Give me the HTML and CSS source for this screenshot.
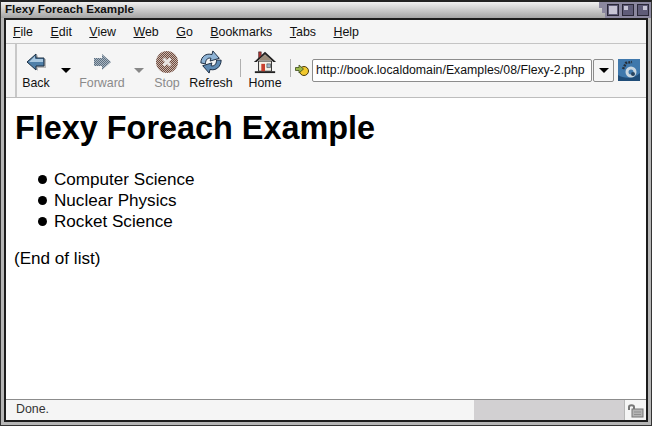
FILE: index.html
```html
<!DOCTYPE html>
<html lang="en">
<head>
  <meta charset="UTF-8">
  <title>Flexy Foreach Example</title>
  <link rel="stylesheet" href="styles.css">
</head>
<body>

  <div class="window">
    <div class="titlebar">
      <span class="title">Flexy Foreach Example</span>
      <div class="wm-buttons">
        <span class="wm-btn"><i class="wm-full"></i></span>
        <span class="wm-btn"><i class="wm-half"></i></span>
        <span class="wm-btn"><i class="wm-half wm-right"></i></span>
      </div>
    </div>

    <div class="frame">
      <div class="menubar">
        <span class="menu"><u>F</u>ile</span>
        <span class="menu"><u>E</u>dit</span>
        <span class="menu"><u>V</u>iew</span>
        <span class="menu"><u>W</u>eb</span>
        <span class="menu"><u>G</u>o</span>
        <span class="menu"><u>B</u>ookmarks</span>
        <span class="menu"><u>T</u>abs</span>
        <span class="menu"><u>H</u>elp</span>
      </div>

      <div class="toolbar">
        <div class="grip"></div>

        <div class="tool tool-back">
          <svg width="24" height="24" viewBox="0 0 24 24">
            <path d="M5 13 L14 5 V9 H22 V18 H14 V21 Z" fill="#bbb"/>
            <path d="M3 12 L12 4 V8 H20 V16 H12 V20 Z" fill="#4f7fa8" stroke="#1c2f42"/>
            <path d="M5 12 L11 6 V9 H19 V12 Z" fill="#a9c8e0"/>
          </svg>
          <span>Back</span>
        </div>
        <div class="arrow"></div>

        <div class="tool tool-forward off">
          <svg width="24" height="24" viewBox="0 0 24 24">
            <defs>
              <pattern id="dither" width="2" height="2" patternUnits="userSpaceOnUse">
                <rect width="2" height="2" fill="#a9b6c2"/>
                <rect width="1" height="1" fill="#5d6f80"/>
                <rect x="1" y="1" width="1" height="1" fill="#5d6f80"/>
              </pattern>
              <pattern id="ditherstop" width="2" height="2" patternUnits="userSpaceOnUse">
                <rect width="2" height="2" fill="#c9b7ae"/>
                <rect width="1" height="1" fill="#6e4a3e"/>
                <rect x="1" y="1" width="1" height="1" fill="#6e4a3e"/>
              </pattern>
            </defs>
            <path d="M21 12 L12 4 V8 H4 V16 H12 V20 Z" fill="url(#dither)"/>
          </svg>
          <span>Forward</span>
        </div>
        <div class="arrow off"></div>

        <div class="tool tool-stop off">
          <svg width="24" height="24" viewBox="0 0 24 24">
            <circle cx="12" cy="12" r="11" fill="url(#ditherstop)"/>
            <path d="M8.500 8.500 L15.500 15.500 M15.500 8.500 L8.500 15.500" stroke="#e8e4e2" stroke-width="3"/>
          </svg>
          <span>Stop</span>
        </div>

        <div class="tool tool-refresh">
          <svg width="26" height="26" viewBox="0 0 26 26">
            <path d="M2 14 C2 7 8 3 14 5 L15 1 L22 9 L12 12 L13 9 C10 8 7 10 7 15 Z" fill="#8fb4d6" stroke="#14243a"/>
            <path d="M24 11 C24 18 18 23 12 21 L11 25 L4 17 L14 14 L13 17 C16 18 19 16 19 11 Z" fill="#5f8ab3" stroke="#14243a"/>
          </svg>
          <span>Refresh</span>
        </div>

        <div class="sep"></div>

        <div class="tool tool-home">
          <svg width="26" height="26" viewBox="0 0 26 26">
            <path d="M2 23 H24 V25 H2 Z" fill="#222"/>
            <path d="M6 12 H20 V23 H6 Z" fill="#f6f2e8" stroke="#222"/>
            <path d="M1 13 L13 2 L25 13 H22 L13 5 L4 13 Z" fill="#222"/>
            <path d="M6 11 L13 5 L20 11 Z" fill="#9a8a78"/>
            <path d="M6 2 H9 V6 L6 9 Z" fill="#a33" stroke="#222" stroke-width=".5"/>
            <path d="M9 15 H13 V23 H9 Z" fill="#c8402f"/>
            <path d="M15 15 H19 V19 H15 Z" fill="#9db4c8" stroke="#222" stroke-width=".5"/>
          </svg>
          <span>Home</span>
        </div>

        <div class="sep sep-url"></div>

        <svg class="go-icon" width="14" height="12" viewBox="0 0 14 12">
          <circle cx="9" cy="7" r="4.5" fill="#f2c92e" stroke="#4a3b10"/>
          <path d="M0.5 3.500 H4 V1 L8.500 5 L4 9 V6.500 H0.500 Z" fill="#9ab84a" stroke="#3d4a1a" stroke-width=".8"/>
        </svg>

        <div class="urlbar">
          <div class="url">http://book.localdomain/Examples/08/Flexy-2.php</div>
          <div class="url-drop"><i></i></div>
        </div>

        <div class="throbber">
          <svg width="22" height="22" viewBox="0 0 22 22">
            <rect width="22" height="22" fill="#3f78ac"/>
            <path d="M0 16 C6 20 16 20 22 14 V22 H0 Z" fill="#1f4c78"/>
            <circle cx="13" cy="13" r="4" fill="none" stroke="#c9d6e0" stroke-width="3"/>
            <path d="M5 10 L8 4 L14 3" fill="none" stroke="#27303a" stroke-width="2.500" stroke-dasharray="2 1"/>
            <circle cx="15" cy="15" r="2" fill="#27435e"/>
          </svg>
        </div>
      </div>

      <div class="content">
        <h1>Flexy Foreach Example</h1>
        <ul>
          <li>Computer Science</li>
          <li>Nuclear Physics</li>
          <li>Rocket Science</li>
        </ul>
        <p>(End of list)</p>
      </div>

      <div class="statusbar">
        <div class="status-text">Done.</div>
        <div class="status-progress"></div>
        <div class="status-lock">
          <svg width="18" height="15" viewBox="0 0 18 15">
            <path d="M2 7 V4 C2 1.500 7 1.500 7 4 V6" fill="none" stroke="#777" stroke-width="2"/>
            <rect x="5" y="6" width="11" height="8" fill="#b4b4b4" stroke="#777"/>
            <path d="M7 9 H14 M7 11.500 H14" stroke="#8f8f8f"/>
          </svg>
        </div>
      </div>
    </div>
  </div>

</body>
</html>
```

FILE: styles.css
```css
html, body {
  margin: 0;
  padding: 0;
}

body {
  width: 652px;
  height: 426px;
  overflow: hidden;
  font-family: "Liberation Sans", sans-serif;
  background-color: #fff;
}

.window {
  box-sizing: border-box;
  width: 652px;
  height: 426px;
  display: flex;
  flex-direction: column;
  background-color: #b5b5b5;
  border: 1px solid #333;
  border-top: 2px solid #222;
  padding: 0 3px 3px 3px;
}

.titlebar {
  height: 16px;
  margin: 0 -3px;
  padding-left: 4px;
  display: flex;
  justify-content: space-between;
  background: linear-gradient(#f0f0f0, #a4a4a4);
  font-size: 11.6px;
  font-weight: bold;
  line-height: 13px;
  color: #111;
}

.wm-buttons {
  display: flex;
  height: 16px;
  padding: 0 2px 0 11px;
  gap: 3px;
  background-color: #8b889f;
  clip-path: polygon(3px 0, 100% 0, 100% 100%, 9px 100%, 9px 11px, 6px 11px, 6px 6px, 3px 6px);
}

.wm-btn {
  width: 12px;
  height: 12px;
  margin-top: 2px;
  padding: 1px;
  box-sizing: border-box;
  border: 1px solid #2a2838;
  background-color: #5f5c78;
}

.wm-btn i {
  display: block;
  width: 8px;
  height: 8px;
  background-color: #c6c4d4;
}

.wm-btn .wm-half {
  width: 4px;
  height: 4px;
}

.wm-btn .wm-right {
  margin-left: 4px;
}

.frame {
  flex: 1;
  min-height: 0;
  display: flex;
  flex-direction: column;
  border: 2px solid #1c1c1c;
  background-color: #f5f5f5;
}

.menubar {
  height: 23px;
  padding-left: 7px;
  display: flex;
  align-items: center;
  gap: 17.5px;
  font-size: 12.4px;
  color: #111;
  border-bottom: 1px solid #c4c4c4;
}

.toolbar {
  height: 53px;
  display: flex;
  align-items: flex-start;
  border-bottom: 1px solid #bdbdbd;
  font-size: 12.4px;
  color: #111;
}

.grip {
  width: 5px;
  height: 53px;
  margin-left: 2px;
  padding-right: 2px;
  border-right: 2px solid #c8c8c8;
  background-image: radial-gradient(#999 40%, transparent 50%);
  background-size: 2px 2px;
  background-position: 0 10px;
  background-clip: content-box;
  background-repeat: repeat;
}

.tool {
  display: flex;
  flex-direction: column;
  align-items: center;
  gap: 2px;
  padding-top: 6px;
  box-sizing: border-box;
}

.tool span {
  line-height: 14px;
}

.tool svg {
  height: 24px;
}

.off {
  color: #8a8a8a;
}

.tool-back {
  width: 38px;
}

.tool-forward {
  width: 54px;
  margin-left: 4px;
}

.tool-stop {
  width: 40px;
  margin-left: 3px;
}

.tool-refresh {
  width: 46px;
  margin-left: 1px;
}

.tool-home {
  width: 42px;
  margin-left: 3px;
}

.arrow {
  width: 0;
  height: 0;
  margin: 24px 0 0 6px;
  border-left: 5px solid transparent;
  border-right: 5px solid transparent;
  border-top: 5px solid #000;
}

.arrow.off {
  margin-left: 5px;
  border-top-color: #888;
}

.sep {
  width: 1px;
  height: 18px;
  margin: 15px 0 0 6px;
  background-color: #b0b0b0;
}

.sep-url {
  margin-left: 4px;
}

.go-icon {
  margin: 20px 3px 0 4px;
}

.urlbar {
  width: 302px;
  height: 23px;
  margin-top: 15px;
  display: flex;
}

.url {
  flex: 1;
  box-sizing: border-box;
  padding: 0 3px;
  background-color: #fff;
  border: 1px solid #8c8c8c;
  border-radius: 2px;
  font-size: 12.3px;
  line-height: 21px;
  white-space: nowrap;
  overflow: hidden;
}

.url-drop {
  width: 21px;
  margin-left: 1px;
  box-sizing: border-box;
  border: 1px solid #8c8c8c;
  border-radius: 2px;
  background-color: #f5f5f5;
  display: flex;
  align-items: center;
  justify-content: center;
}

.url-drop i {
  width: 0;
  height: 0;
  border-left: 5px solid transparent;
  border-right: 5px solid transparent;
  border-top: 5px solid #000;
}

.throbber {
  margin: 15px 0 0 4px;
  height: 22px;
}

.content {
  flex: 1;
  min-height: 0;
  background-color: #fff;
  padding: 0 9px 0 8px;
  color: #000;
  font-size: 17.1px;
}

h1 {
  font-size: 32.4px;
  line-height: 38px;
  margin: 11px 0 22px 1px;
}

ul {
  margin: 0 0 16px;
  padding: 0 0 0 39px;
  list-style: none;
  line-height: 21px;
}

li {
  display: flex;
  align-items: center;
}

li::before {
  content: "";
  width: 9px;
  height: 9px;
  margin: 0 7px 0 -15px;
  border-radius: 50%;
  background-color: #000;
}

p {
  margin: 0;
  line-height: 21px;
}

.statusbar {
  height: 20px;
  display: flex;
  border-top: 1px solid #8c8c8c;
  font-size: 12.4px;
  color: #333;
  background-color: #f5f5f5;
}

.status-text {
  flex: 1;
  padding-left: 10px;
  line-height: 19px;
}

.status-progress {
  width: 150px;
  background-color: #d2d0d2;
}

.status-lock {
  width: 21px;
  display: flex;
  align-items: center;
  justify-content: center;
  border-left: 1px solid #b8b8b8;
}
```
